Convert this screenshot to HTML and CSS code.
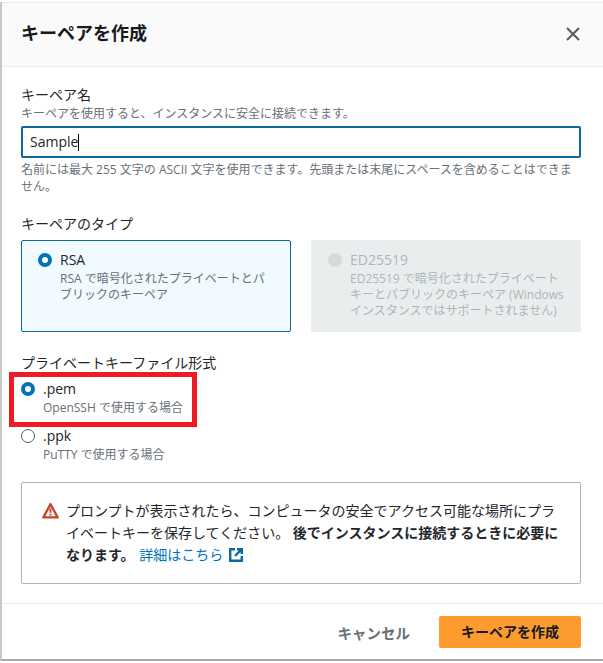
FILE: index.html
```html
<!DOCTYPE html>
<html lang="ja">
<head>
    <title>キーペアを作成</title>
    <link rel="stylesheet" href="styles.css">
</head>
<body>
    <div class="modal">
        <div class="modal-header">
            <h2>キーペアを作成</h2>
            <svg class="close-icon" width="16" height="16" viewBox="0 0 16 16">
                <path d="M2 2l12 12M14 2L2 14"/>
            </svg>
        </div>

        <div class="modal-body">
            <div class="field field-name">
                <div class="field-label">キーペア名</div>
                <div class="field-desc">キーペアを使用すると、インスタンスに安全に接続できます。</div>
                <div class="text-input">Sample<span class="caret"></span></div>
                <div class="field-hint">名前には最大 255 文字の ASCII 文字を使用できます。先頭または末尾にスペースを含めることはできません。</div>
            </div>

            <div class="field field-type">
                <div class="field-label">キーペアのタイプ</div>
                <div class="tiles">
                    <div class="tile selected">
                        <span class="radio checked"></span>
                        <div>
                            <div class="option-name">RSA</div>
                            <div class="option-desc">RSA で暗号化されたプライベートとパブリックのキーペア</div>
                        </div>
                    </div>
                    <div class="tile disabled">
                        <span class="radio off"></span>
                        <div>
                            <div class="option-name">ED25519</div>
                            <div class="option-desc">ED25519 で暗号化されたプライベートキーとパブリックのキーペア (Windows インスタンスではサポートされません)</div>
                        </div>
                    </div>
                </div>
            </div>

            <div class="field field-format">
                <div class="field-label">プライベートキーファイル形式</div>
                <div class="options">
                    <div class="option">
                        <span class="radio checked"></span>
                        <div>
                            <div class="option-name">.pem</div>
                            <div class="option-desc">OpenSSH で使用する場合</div>
                        </div>
                    </div>
                    <div class="option">
                        <span class="radio"></span>
                        <div>
                            <div class="option-name">.ppk</div>
                            <div class="option-desc">PuTTY で使用する場合</div>
                        </div>
                    </div>
                </div>
                <div class="highlight"></div>
            </div>

            <div class="alert">
                <svg class="alert-icon" width="17" height="17" viewBox="0 0 16 16">
                    <path d="M8 2L1.3 14.5h13.4z"/>
                    <rect class="mark" x="7.1" y="6" width="1.8" height="4.2"/>
                    <rect class="mark" x="7.1" y="11" width="1.8" height="1.8"/>
                </svg>
                <div class="alert-text">プロンプトが表示されたら、コンピュータの安全でアクセス可能な場所にプライベートキーを保存してください。 <b>後でインスタンスに接続するときに必要になります。</b> <a href="#">詳細はこちら</a>
                    <svg class="ext-icon" width="14" height="14" viewBox="0 0 14 14">
                        <path class="ext-box" d="M6 1.2H1.2v11.6h11.6V8"/>
                        <path class="ext-arrow" d="M8 1.2h4.8V6M12.8 1.2L6 8"/>
                    </svg>
                </div>
            </div>
        </div>

        <div class="modal-footer">
            <span class="btn-cancel">キャンセル</span>
            <span class="btn-primary">キーペアを作成</span>
        </div>
    </div>
</body>
</html>
```

FILE: styles.css
```css
:root {
    --blue: #0073bb;
    --text: #22262c;
    --muted: #687078;
    --line: #eaeded;
}

* {
    box-sizing: border-box;
}

html, body {
    height: 100%;
}

body {
    margin: 0;
    background: white;
    color: var(--text);
    font-family: "Open Sans", "Noto Sans CJK JP", sans-serif;
    font-size: 14px;
}

.modal {
    height: 659px;
    margin-top: 2px;
    border-left: 2px solid #c8c8c8;
    border-bottom: 2px solid #a8a8a8;
    display: flex;
    flex-direction: column;
}

.modal-header {
    height: 65px;
    padding: 0 22px 6px 19px;
    background: #fafafa;
    border-top: 1px solid var(--line);
    border-bottom: 1px solid var(--line);
    display: flex;
    align-items: center;
    justify-content: space-between;
}

.modal-header h2 {
    margin: 0;
    font-size: 18px;
    font-weight: 700;
    color: #16191f;
}

.close-icon {
    margin-top: 4px;
}

.close-icon path {
    fill: none;
    stroke: #545b64;
    stroke-width: 2;
}

.modal-body {
    flex: 1;
    padding: 18px 22px 0 19px;
}

.field-label {
    font-size: 14px;
    line-height: 20px;
}

.field-name .field-label {
    margin-bottom: 1px;
}

.field-desc, .field-hint, .option-desc {
    font-size: 12px;
    line-height: 16px;
    color: var(--muted);
}

.text-input {
    height: 32px;
    margin-top: 4px;
    padding: 0 7px;
    border: 2px solid #0a6a9e;
    border-radius: 2px;
    line-height: 28px;
    display: flex;
    align-items: center;
}

.caret {
    width: 1px;
    height: 17px;
    background: black;
}

.field-hint {
    margin-top: 3px;
    line-height: 17px;
}

.field-type {
    margin-top: 19px;
}

.tiles {
    margin-top: 6px;
    display: grid;
    grid-template-columns: 270px 270px;
    gap: 20px;
}

.tile {
    height: 92px;
    padding: 9px 16px;
    border: 1px solid transparent;
    border-radius: 2px;
    display: flex;
    gap: 8px;
}

.tile.selected {
    background: #f1faff;
    border-color: #0a6a9e;
}

.tile.disabled {
    background: var(--line);
    color: #aab7b8;
}

.tile.disabled .option-desc {
    color: #aab7b8;
}

.radio {
    flex: none;
    width: 14px;
    height: 14px;
    margin-top: 3px;
    border: 1px solid #545b64;
    border-radius: 50%;
    background: white;
}

.radio.checked {
    border: 4px solid var(--blue);
}

.radio.off {
    border: none;
    background: #d5dbdb;
}

.option-name {
    line-height: 20px;
}

.option-desc {
    margin-top: 1px;
}

.field-format {
    position: relative;
    margin-top: 21px;
}

.options {
    margin-top: 4px;
}

.option {
    display: flex;
    gap: 8px;
    height: 47px;
    padding-top: 2px;
}

/* red annotation drawn on top of the screenshot */
.highlight {
    position: absolute;
    left: -12px;
    top: 19px;
    width: 188px;
    height: 55px;
    border: 5px solid #ed1c24;
}

.alert {
    margin-top: 11px;
    height: 102px;
    padding: 17px 20px;
    border: 1px solid #aab7b8;
    border-radius: 2px;
    display: flex;
    gap: 7px;
}

.alert-icon {
    flex: none;
    margin-top: 2px;
}

.alert-icon path {
    fill: white;
    stroke: #c9432c;
    stroke-width: 2.2;
    stroke-linejoin: round;
}

.alert-icon .mark {
    fill: #c9432c;
}

.alert-text {
    line-height: 22px;
}

.alert-text a {
    color: #0073bb;
    text-decoration: none;
    margin-left: 1px;
}

.ext-icon {
    vertical-align: -2px;
    margin-left: 2px;
}

.ext-icon path {
    fill: none;
    stroke: #0a6a9e;
    stroke-width: 2.4;
}

.modal-footer {
    height: 56px;
    padding: 1px 22px 0 0;
    border-top: 1px solid var(--line);
    display: flex;
    align-items: center;
    justify-content: flex-end;
    gap: 29px;
}

.btn-cancel {
    color: var(--muted);
    font-size: 14.5px;
    font-weight: 700;
}

.btn-primary {
    width: 142px;
    height: 32px;
    background: #fd9b2f;
    border-radius: 2px;
    font-weight: 700;
    text-align: center;
    line-height: 32px;
    color: #16191f;
}
```
